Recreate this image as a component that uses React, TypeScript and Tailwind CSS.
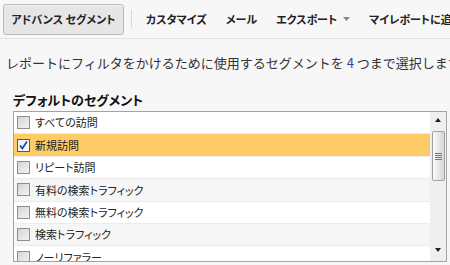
const segments = [
  { label: "すべての訪問", checked: false },
  { label: "新規訪問", checked: true },
  { label: "リピート訪問", checked: false },
  { label: "有料の検索トラフィック", checked: false },
  { label: "無料の検索トラフィック", checked: false },
  { label: "検索トラフィック", checked: false },
  { label: "ノーリファラー", checked: false },
]

function Checkbox({ checked }: { checked: boolean }) {
  if (checked) {
    return (
      <span className="relative w-[13px] h-[13px] shrink-0 border border-[#3d5a8c] bg-gradient-to-br from-[#e8ecf4] to-white">
        <svg viewBox="0 0 13 13" className="absolute left-[-1px] top-[-1px] w-[13px] h-[13px]">
          <path d="M3 6.5 L5.3 9.5 L10 2.5" fill="none" stroke="#2148b8" strokeWidth="1.8" />
        </svg>
      </span>
    )
  }
  return (
    <span className="w-[13px] h-[13px] shrink-0 border border-[#8e8e8e] bg-gradient-to-br from-[#d4d4d4] to-[#f4f4f4]" />
  )
}

export default function App() {
  return (
    <div className="w-[450px] h-[265px] overflow-hidden bg-[#f7f7f7] text-[#222] font-['Noto_Sans_CJK_JP',sans-serif]">
      <div className="h-[39px] border-b border-[#e2e2e2] flex items-center pl-[3px] whitespace-nowrap [font-feature-settings:'palt']">
        <div className="shrink-0 h-[31px] w-[121px] flex items-center justify-center rounded-[3px] border border-[#b8b8b8] bg-[#e6e6e6] shadow-[inset_0_1px_0_#f2f2f2] text-[11px] font-bold">
          アドバンス セグメント
        </div>
        <div className="shrink-0 w-px h-[18px] bg-[#d8d8d8] ml-[7px]" />
        <div className="shrink-0 flex items-center gap-[19px] ml-[14px] text-[11px] font-bold">
          <span>カスタマイズ</span>
          <span>メール</span>
          <span className="flex items-center gap-[6px]">
            エクスポート
            <svg viewBox="0 0 7 4" className="w-[7px] h-[4px]">
              <path d="M0 0 L3.5 4 L7 0 Z" fill="#888" />
            </svg>
          </span>
          <span>マイレポートに追加</span>
        </div>
      </div>

      <p className="mt-[16px] pl-[6px] text-[13px] leading-[16px] text-[#333] whitespace-nowrap">
        レポートにフィルタをかけるために使用するセグメントを <span className="text-[#3344a0]">4</span> つまで選択します
      </p>

      <h2 className="mt-[21px] pl-[13px] text-[13px] leading-[16px] font-bold text-[#111] [font-feature-settings:'palt']">
        デフォルトのセグメント
      </h2>

      <div className="mt-[3px] ml-[13px] w-[434px] h-[151px] border border-[#a3a3a3] bg-white flex [font-feature-settings:'palt']">
        <div className="flex-1 overflow-hidden">
          {segments.map((s, i) => (
            <div
              key={s.label}
              className={
                "h-[22.4px] flex items-center gap-[5px] pl-[3px] border-b border-[#ececec] text-[11px] text-[#222] " +
                (s.checked ? "bg-[#fecb66]" : i % 2 === 1 ? "bg-[#f6f6f6]" : "bg-white")
              }
            >
              <Checkbox checked={s.checked} />
              <span>{s.label}</span>
            </div>
          ))}
        </div>
        <div className="w-[16px] bg-[#efefef] flex flex-col items-center">
          <svg viewBox="0 0 6 4" className="w-[6px] h-[4px] mt-[6px]">
            <path d="M0 4 L3 0 L6 4 Z" fill="#222" />
          </svg>
          <div className="mt-[9px] w-[13px] h-[50px] rounded-[2px] border border-[#a2a2a2] bg-gradient-to-r from-[#fafafa] to-[#d6d6d6] flex flex-col items-center justify-center gap-[1px]">
            <span className="w-[7px] h-px bg-[#777]" />
            <span className="w-[7px] h-px bg-[#777]" />
            <span className="w-[7px] h-px bg-[#777]" />
            <span className="w-[7px] h-px bg-[#777]" />
          </div>
          <div className="flex-1" />
          <svg viewBox="0 0 6 4" className="w-[6px] h-[4px] mb-[9px]">
            <path d="M0 0 L3 4 L6 0 Z" fill="#222" />
          </svg>
        </div>
      </div>
    </div>
  )
}
